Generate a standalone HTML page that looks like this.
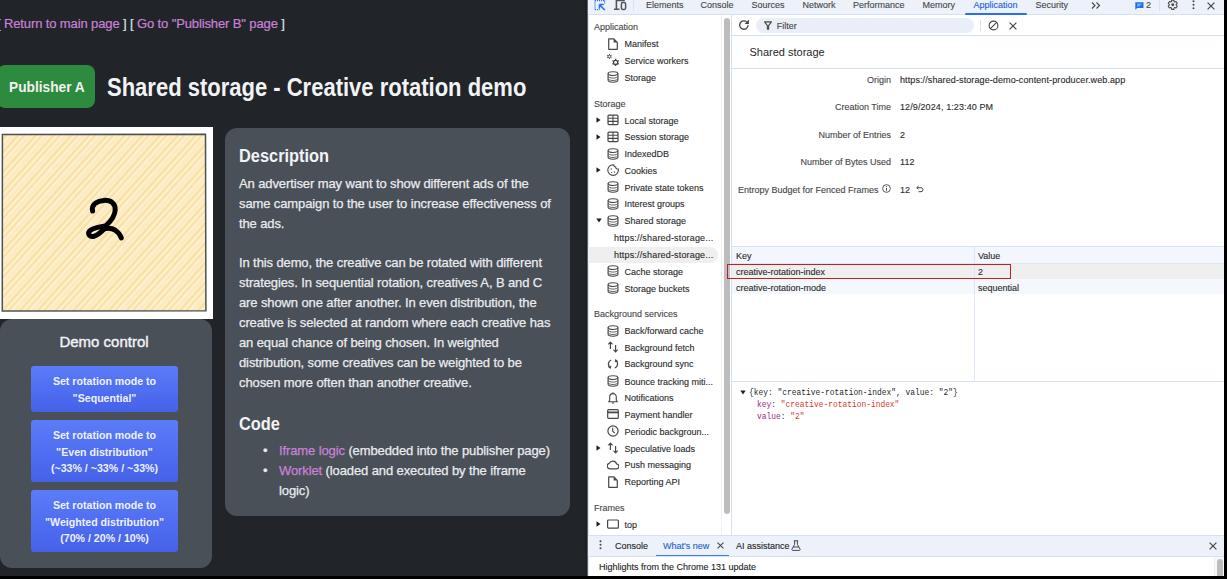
<!DOCTYPE html>
<html><head><meta charset="utf-8">
<style>
*{margin:0;padding:0;box-sizing:border-box}
html,body{width:1227px;height:579px;overflow:hidden;background:#000}
body{position:relative;font-family:"Liberation Sans",sans-serif}
.abs{position:absolute}
.nw{white-space:nowrap}
#page{position:absolute;left:0;top:0;width:588px;height:576px;background:#212529;overflow:hidden;color:#dee2e6}
#links{position:absolute;left:-3px;top:16px;font-size:13px;line-height:16px;white-space:nowrap;color:#dee2e6;letter-spacing:-0.12px}
#links a{color:#c882d8;text-decoration:none}
#badge{position:absolute;left:-3px;top:65px;width:98px;height:43px;background:#2c8b3e;border-radius:8px}
#badget{position:absolute;left:8.5px;top:77px;color:#f1f1f1;font-size:15px;line-height:20px;font-weight:700;white-space:nowrap;transform:scaleX(0.915);transform-origin:0 0}
#title{position:absolute;left:107px;top:72px;font-size:25px;line-height:30px;font-weight:700;color:#f1f3f5;white-space:nowrap;transform:scaleX(0.88);transform-origin:0 0}
#frame{position:absolute;left:0;top:127px;width:213px;height:192px;background:#fff}
#ctrl{position:absolute;left:0;top:319px;width:212px;height:249px;background:#495057;border-radius:12px}
#ctrl h3{position:absolute;left:0;width:212px;text-align:center;top:333px;font-weight:400;font-size:15px;line-height:18px;color:#f1f3f5}
.btn{position:absolute;left:31px;width:147px;border-radius:3px;background:linear-gradient(#5b7cf8,#4561e9)}
.bt{position:absolute;left:31px;width:147px;color:#eef1ff;font-weight:700;font-size:11px;line-height:16.4px;text-align:center;white-space:nowrap;transform:scaleX(0.965)}
#desc{position:absolute;left:225px;top:128px;width:345px;height:388px;background:#495057;border-radius:12px}
.p{position:absolute;left:239px;font-size:13px;white-space:nowrap;color:#e9ecef;line-height:20px;letter-spacing:-0.11px;-webkit-text-stroke:0.25px}
.h{position:absolute;left:239px;font-size:18px;font-weight:700;white-space:nowrap;color:#f1f3f5;line-height:20px;transform:scaleX(0.91);transform-origin:0 0}
.p a{color:#c882d8;text-decoration:none}

/* devtools */
.sb,.tb,.lbl,.val{-webkit-text-stroke:0.12px}
#links{-webkit-text-stroke:0.2px}
.sb{position:absolute;font-size:9px;line-height:12px;white-space:nowrap;color:#2b2b2b}
.hd{color:#474747}
.sel{position:absolute;left:588px;width:130px;height:15.5px;background:#efefef;border-radius:0 8px 8px 0}
.tb{position:absolute;top:-1px;font-size:9px;line-height:12px;white-space:nowrap;color:#474747}
.lbl{position:absolute;right:336px;font-size:9px;line-height:12px;white-space:nowrap;color:#474747;text-align:right}
.val{position:absolute;left:900px;font-size:9px;line-height:12px;white-space:nowrap;color:#2b2b2b;letter-spacing:0.1px}
.mono{position:absolute;font-family:"Liberation Mono",monospace;font-size:8.6px;line-height:11px;white-space:nowrap;transform:scaleX(0.92);transform-origin:0 0}

#dt{position:absolute;left:588px;top:0;width:637px;height:576px;background:#fff;overflow:hidden;color:#1f1f1f;font-size:9px}
</style></head><body>
<div id="page">
  <div id="links">[ <a>Return to main page</a> ] [ <a>Go to "Publisher B" page</a> ]</div>
  <div id="badge"></div><div id="badget">Publisher A</div>
  <div id="title">Shared storage - Creative rotation demo</div>
  <div id="frame"></div>
<svg class="abs" style="left:0;top:126px" width="212" height="193" viewBox="0 126 212 193">
<defs>
<pattern id="hatch" patternUnits="userSpaceOnUse" width="4.4" height="20" patternTransform="rotate(42)">
<rect x="0" y="0" width="4.4" height="20" fill="#fae3a8"/>
<rect x="0" y="0" width="1.5" height="20" fill="#fef5df"/>
</pattern>
<pattern id="hatch2" patternUnits="userSpaceOnUse" width="13.2" height="20" patternTransform="rotate(42)">
<rect x="6.6" y="0" width="1.2" height="20" fill="#fffaf0" opacity="0.6"/>
<rect x="10" y="0" width="1" height="20" fill="#f7d990" opacity="0.5"/>
</pattern>
</defs>
<rect x="2.6" y="134.4" width="203" height="176.4" fill="url(#hatch)"/>
<rect x="2.6" y="134.4" width="203" height="176.4" fill="url(#hatch2)"/>
<path d="M2.4,134.6 L205.5,134.2 L205.9,310.8 L2.3,311 Z" fill="none" stroke="#505050" stroke-width="1.5"/>
<path d="M92.6,211 C91,205.5 96,200.8 104,200.4 C111,200 115.5,203.5 115.2,210 C114.9,216 110,222 106,225.6 C101,227 93,227.5 89.6,231 C87.2,234.5 90,237.2 94,236.2 C98,235.2 101,232 103.5,229.5 C106,227.6 111,227.6 115,230 C118,232 120.3,235 121.3,237.8" fill="none" stroke="#000" stroke-width="5" stroke-linecap="round" stroke-linejoin="round"/>
</svg>
  <div id="ctrl"></div>
  <div id="dctl" class="abs nw" style="left:0;width:208px;text-align:center;top:333px;font-size:15px;font-weight:400;line-height:18px;color:#f1f3f5;-webkit-text-stroke:0.4px">Demo control</div>
  <div class="btn" style="top:366px;height:46px"></div><div class="bt" style="top:373.4px">Set rotation mode to<br>"Sequential"</div>
  <div class="btn" style="top:420px;height:62px"></div><div class="bt" style="top:427.4px">Set rotation mode to<br>"Even distribution"<br>(~33% / ~33% / ~33%)</div>
  <div class="btn" style="top:490px;height:62px"></div><div class="bt" style="top:497.4px">Set rotation mode to<br>"Weighted distribution"<br>(70% / 20% / 10%)</div>
  <div id="desc"></div>
  <div class="h" style="top:146px">Description</div>
  <div class="p" style="top:174px">An advertiser may want to show different ads of the<br>same campaign to the user to increase effectiveness of<br>the ads.</div>
  <div class="p" style="top:253px">In this demo, the creative can be rotated with different<br>strategies. In sequential rotation, creatives A, B and C<br>are shown one after another. In even distribution, the<br>creative is selected at random where each creative has<br>an equal chance of being chosen. In weighted<br>distribution, some creatives can be weighted to be<br>chosen more often than another creative.</div>
  <div class="h" style="top:413.5px">Code</div>
  <div class="p" style="top:440.5px;left:263px">&bull;</div>
  <div class="p" style="top:460.5px;left:263px">&bull;</div>
  <div class="p" style="top:440.5px;left:279px"><a>Iframe logic</a> (embedded into the publisher page)<br><a>Worklet</a> (loaded and executed by the iframe<br>logic)</div>
</div>
<!-- devtools background -->
<div class="abs" style="left:588px;top:0;width:636px;height:576px;background:#fff"></div>
<div class="abs" style="left:585px;top:0;width:2px;height:576px;background:#1c1f23"></div>
<div class="abs" style="left:587px;top:0;width:1px;height:576px;background:#5f6670"></div>
<div class="abs" style="left:588px;top:0;width:1px;height:576px;background:#dbe4f3"></div>
<!-- top toolbar -->
<div class="abs" style="left:588px;top:0;width:636px;height:14px;background:#ecf1fa"></div>
<div class="abs" style="left:588px;top:14px;width:636px;height:1px;background:#d4e0f3"></div>
<!-- inspect icon -->
<svg class="abs" style="left:588px;top:0" width="60" height="15" viewBox="588 0 60 15"><path d="M595,0.6H605M595,0.6V10M595,9.6H599.6M604.6,0.6V3.4" fill="none" stroke="#2a6ef5" stroke-width="1.1" stroke-dasharray="1.1 0.9"/><path d="M599.4,4.6L604.8,10M599.4,4.4H603.8M599.4,4.4V8.8" fill="none" stroke="#2a6ef5" stroke-width="1.5"/>
<path d="M616.4,0V9.2M614,9.2H619.5M615.6,0.4H624.8" fill="none" stroke="#555" stroke-width="1.6"/><rect x="621.4" y="2.6" width="4.2" height="6.8" rx="1.3" fill="none" stroke="#555" stroke-width="1.5"/></svg>
<div class="abs" style="left:633px;top:0;width:1px;height:11px;background:#d8e2f2"></div>
<div class="tb" style="left:646px">Elements</div>
<div class="tb" style="left:700.5px">Console</div>
<div class="tb" style="left:751.5px">Sources</div>
<div class="tb" style="left:802.5px">Network</div>
<div class="tb" style="left:853px">Performance</div>
<div class="tb" style="left:922.5px">Memory</div>
<div class="tb" style="left:973.5px;color:#1c64d4">Application</div>
<div class="abs" style="left:965px;top:13px;width:62px;height:2px;background:#2a6ef5;border-radius:1px"></div>
<div class="tb" style="left:1035.5px">Security</div>
<svg class="abs" style="left:1091px;top:2px" width="11" height="7" viewBox="0 0 11 7"><path d="M1 .5l3 3-3 3M5.5 .5l3 3-3 3" fill="none" stroke="#474747" stroke-width="1.1"/></svg>
<svg class="abs" style="left:1135px;top:2px" width="9" height="8" viewBox="0 0 9 8"><path d="M0.3 0.3h8.2v5.6H2.2L0.3 7.7z" fill="#1a73e8"/><path d="M2 2.2h4.5M2 3.8h3" stroke="#cfe0fb" stroke-width=".7"/></svg>
<div class="tb" style="left:1146px">2</div>
<div class="abs" style="left:1159px;top:0;width:1px;height:11px;background:#d8e2f2"></div>
<svg class="abs" style="left:1167.3px;top:-0.8px" width="11.5" height="11.5" viewBox="0 0 24 24"><path d="M19.14,12.94c0.04-0.3,0.06-0.61,0.06-0.94c0-0.32-0.02-0.64-0.07-0.94l2.03-1.58c0.18-0.14,0.23-0.41,0.12-0.61l-1.92-3.32c-0.12-0.22-0.37-0.29-0.59-0.22l-2.39,0.96c-0.5-0.38-1.030-0.7-1.62-0.94L14.4,2.81c-0.04-0.24-0.24-0.41-0.48-0.41h-3.84c-0.24,0-0.43,0.17-0.47,0.41L9.25,5.35C8.66,5.590,8.12,5.92,7.63,6.29L5.24,5.33c-0.22-0.08-0.47,0-0.59,0.22L2.74,8.87C2.62,9.08,2.66,9.34,2.86,9.48l2.03,1.58C4.84,11.36,4.8,11.69,4.8,12s0.02,0.64,0.07,0.94l-2.03,1.58c-0.18,0.14-0.23,0.41-0.12,0.61l1.92,3.32c0.12,0.22,0.37,0.29,0.59,0.22l2.39-0.96c0.5,0.38,1.03,0.7,1.62,0.94l0.36,2.54c0.05,0.24,0.24,0.41,0.48,0.41h3.84c0.24,0,0.44-0.17,0.47-0.41l0.36-2.54c0.59-0.24,1.13-0.56,1.62-0.94l2.39,0.96c0.22,0.08,0.47,0,0.59-0.22l1.92-3.32c0.12-0.22,0.07-0.47-0.12-0.61L19.14,12.94z" fill="none" stroke="#474747" stroke-width="2.2" stroke-linejoin="round"/><circle cx="12" cy="12" r="2.9" fill="#474747"/></svg>
<svg class="abs" style="left:1191.5px;top:0" width="3" height="10" viewBox="0 0 3 10"><circle cx="1.5" cy="1.3" r="1" fill="#474747"/><circle cx="1.5" cy="4.8" r="1" fill="#474747"/><circle cx="1.5" cy="8.3" r="1" fill="#474747"/></svg>
<svg class="abs" style="left:1207.2px;top:1.6px" width="8" height="8" viewBox="0 0 8 8"><path d="M.6 .6l6.8 6.8M7.4 .6L.6 7.4" stroke="#474747" stroke-width="1.2"/></svg>

<!-- sidebar scrollbar & divider -->
<div class="abs" style="left:721px;top:15px;width:10px;height:520px;background:#fff;border-left:1px solid #f0f0f0"></div>
<div class="abs" style="left:723.8px;top:18px;width:6px;height:496px;background:#bdbdbd;border-radius:3px"></div>
<div class="abs" style="left:731px;top:15px;width:1px;height:520px;background:#d4e0f3"></div>

<!-- main toolbar -->
<svg class="abs" style="left:738px;top:19px" width="12" height="12" viewBox="0 0 12 12"><path d="M10.1 6.2a4.2 4.2 0 1 1-1.5-3.4" fill="none" stroke="#474747" stroke-width="1.3"/><path d="M10.9 .6v4.3H6.6z" fill="#474747"/></svg>
<div class="abs" style="left:756px;top:18px;width:218px;height:15px;background:#e9eef7;border-radius:8px"></div>
<svg class="abs" style="left:764px;top:21px" width="8" height="9" viewBox="0 0 8 9"><path d="M.6 .9h6.8L4.6 4.6v3.6H3.4V4.6z" fill="none" stroke="#474747" stroke-width="1.1" stroke-linejoin="round"/></svg>
<div class="sb" style="left:776.7px;top:19.6px;color:#474747">Filter</div>
<div class="abs" style="left:980px;top:20px;width:1px;height:11px;background:#d8e2f2"></div>
<svg class="abs" style="left:987.5px;top:20px" width="11" height="11" viewBox="0 0 12 12"><circle cx="6" cy="6" r="4.8" fill="none" stroke="#474747" stroke-width="1.2"/><path d="M2.6 9.4l6.8-6.8" stroke="#474747" stroke-width="1.2"/></svg>
<svg class="abs" style="left:1009px;top:21.5px" width="8" height="8" viewBox="0 0 8 8"><path d="M.6 .6l6.8 6.8M7.4 .6L.6 7.4" stroke="#474747" stroke-width="1.2"/></svg>
<div class="abs" style="left:732px;top:35px;width:492px;height:1px;background:#d4e0f3"></div>

<!-- header -->
<div class="abs nw" style="left:749.5px;top:44.5px;font-size:11px;line-height:14px;color:#1f1f1f">Shared storage</div>
<div class="abs" style="left:732px;top:68px;width:492px;height:1px;background:#d4e0f3"></div>

<!-- rows -->
<div class="lbl" style="top:74.0px">Origin</div><div class="val" style="top:74.0px">https://shared-storage-demo-content-producer.web.app</div>
<div class="lbl" style="top:101.1px">Creation Time</div><div class="val" style="top:101.1px">12/9/2024, 1:23:40 PM</div>
<div class="lbl" style="top:129.1px">Number of Entries</div><div class="val" style="top:129.1px">2</div>
<div class="lbl" style="top:156.3px">Number of Bytes Used</div><div class="val" style="top:156.3px">112</div>
<div class="lbl" style="top:183.7px;right:348.5px">Entropy Budget for Fenced Frames</div>
<svg class="abs" style="left:881.5px;top:183.5px" width="9" height="9" viewBox="0 0 10 10"><circle cx="5" cy="5" r="4.3" fill="none" stroke="#474747" stroke-width="1"/><path d="M5 4.3v3.2" stroke="#474747" stroke-width="1.1"/><circle cx="5" cy="2.8" r=".6" fill="#474747"/></svg>
<div class="val" style="top:183.7px">12</div>
<svg class="abs" style="left:915.5px;top:185px" width="8" height="8" viewBox="0 0 8 8"><path d="M2.5 1L.8 2.7l1.7 1.7M.8 2.7h4.2a2 2 0 0 1 0 4H2.5" fill="none" stroke="#474747" stroke-width="1"/></svg>

<!-- table -->
<div class="abs" style="left:732px;top:246px;width:492px;height:1px;background:#d4e0f3"></div>
<div class="abs" style="left:732px;top:247px;width:492px;height:16px;background:#f3f6fc"></div>
<div class="abs" style="left:732px;top:263px;width:492px;height:1px;background:#dde6f5"></div>
<div class="abs" style="left:732px;top:264px;width:492px;height:14.5px;background:#efefef"></div>
<div class="abs" style="left:732px;top:278.5px;width:492px;height:15.7px;background:#f4f7fc"></div>
<div class="abs" style="left:974px;top:247px;width:1px;height:134px;background:#dde6f5"></div>
<div class="sb" style="left:736px;top:250px">Key</div>
<div class="sb" style="left:978px;top:250px">Value</div>
<div class="sb" style="left:736px;top:266px">creative-rotation-index</div>
<div class="sb" style="left:978px;top:266px">2</div>
<div class="sb" style="left:736px;top:281.8px">creative-rotation-mode</div>
<div class="sb" style="left:978px;top:281.8px">sequential</div>
<div class="abs" style="left:727px;top:264px;width:284px;height:15px;border:1.3px solid #c41e24"></div>
<div class="abs" style="left:732px;top:381px;width:492px;height:1px;background:#d4e0f3"></div>

<!-- preview -->
<svg class="abs" style="left:739.5px;top:389.5px" width="6" height="5" viewBox="0 0 6 5"><path d="M0.3 0.5L5.7 0.5L3 4.5z" fill="#1f1f1f"/></svg>
<div class="mono" style="left:748.5px;top:388px;color:#1f1f1f">{key: "creative-rotation-index", value: "2"}</div>
<div class="mono" style="left:757px;top:400px"><span style="color:#9b2a7a">key</span><span style="color:#1f1f1f">: </span><span style="color:#d53a2e">"creative-rotation-index"</span></div>
<div class="mono" style="left:757px;top:412px"><span style="color:#9b2a7a">value</span><span style="color:#1f1f1f">: </span><span style="color:#d53a2e">"2"</span></div>

<!-- drawer -->
<div class="abs" style="left:588px;top:535px;width:636px;height:21.5px;background:#edf1f9;border-top:1px solid #d4e0f3;border-bottom:1px solid #d4e0f3"></div>
<svg class="abs" style="left:598.5px;top:540px" width="3" height="10" viewBox="0 0 3 10"><circle cx="1.5" cy="1.3" r="1" fill="#474747"/><circle cx="1.5" cy="4.8" r="1" fill="#474747"/><circle cx="1.5" cy="8.3" r="1" fill="#474747"/></svg>
<div class="sb" style="left:615px;top:539.5px;color:#1f1f1f">Console</div>
<div class="sb" style="left:663px;top:539.5px;color:#1c64d4">What's new</div>
<svg class="abs" style="left:717px;top:541.5px" width="7" height="7" viewBox="0 0 8 8"><path d="M.6 .6l6.8 6.8M7.4 .6L.6 7.4" stroke="#474747" stroke-width="1.2"/></svg>
<div class="abs" style="left:656px;top:554.5px;width:73px;height:1.5px;background:#3b7cf0"></div>
<div class="sb" style="left:736px;top:539.5px;color:#1f1f1f">AI assistance</div>
<svg class="abs" style="left:790.5px;top:539.5px" width="10" height="11" viewBox="0 0 10 11"><path d="M2.8 .8h4.4M3.6 .8v3.6L.9 9.2a.8.8 0 0 0 .7 1.2h6.8a.8.8 0 0 0 .7-1.2L6.4 4.4V.8M2.2 7h5.6" fill="none" stroke="#474747" stroke-width="1"/></svg>
<svg class="abs" style="left:1209px;top:541.5px" width="8" height="8" viewBox="0 0 8 8"><path d="M.6 .6l6.8 6.8M7.4 .6L.6 7.4" stroke="#474747" stroke-width="1.2"/></svg>
<div class="sb" style="left:599px;top:561px;color:#1f1f1f">Highlights from the Chrome 131 update</div>
<div class="abs" style="left:1214px;top:556.5px;width:10px;height:19.5px;background:#f8f8f8;border-left:1px solid #ececec"></div>
<div class="abs" style="left:1217px;top:559px;width:5.5px;height:17px;background:#bdbdbd;border-radius:3px 3px 0 0"></div>
<div class="sb hd" style="top:21.1px;left:594px">Application</div>
<svg class="abs" style="left:606.8px;top:37.7px" width="12" height="12" viewBox="0 0 12 12"><path d="M1.7 .9h5.2l3.4 3.4v7H1.7z" fill="none" stroke="#474747" stroke-width="1.2" stroke-linejoin="round"/><path d="M6.6 .9v3.7h3.7z" fill="#474747"/></svg>
<div class="sb" style="top:38.2px;left:624.5px">Manifest</div>
<svg class="abs" style="left:606.8px;top:54.4px" width="12" height="12" viewBox="0 0 12 12"><circle cx="2.4" cy="2.5" r="1.35" fill="none" stroke="#474747" stroke-width="1.0"/><path d="M3.79 3.30L4.57 3.75M2.40 4.10L2.40 5.00M1.01 3.30L0.23 3.75M1.01 1.70L0.23 1.25M2.40 0.90L2.40 0.00M3.79 1.70L4.57 1.25" stroke="#474747" stroke-width="1.0"/><circle cx="8.6" cy="8.4" r="2.1" fill="none" stroke="#474747" stroke-width="1.3"/><path d="M10.68 9.60L11.72 10.20M8.60 10.80L8.60 12.00M6.52 9.60L5.48 10.20M6.52 7.20L5.48 6.60M8.60 6.00L8.60 4.80M10.68 7.20L11.72 6.60" stroke="#474747" stroke-width="1.3"/></svg>
<div class="sb" style="top:54.9px;left:624.5px">Service workers</div>
<svg class="abs" style="left:606.8px;top:71.4px" width="12" height="12" viewBox="0 0 12 12"><ellipse cx="6" cy="2.6" rx="4.9" ry="1.9" fill="none" stroke="#474747" stroke-width="1.1"/><path d="M1.1 2.6v6.7c0 1.05 2.2 1.9 4.9 1.9s4.9-.85 4.9-1.9V2.6" fill="none" stroke="#474747" stroke-width="1.1"/><path d="M1.1 5.2c0 1.05 2.2 1.9 4.9 1.9s4.9-.85 4.9-1.9M1.1 7.6c0 1.05 2.2 1.9 4.9 1.9s4.9-.85 4.9-1.9" fill="none" stroke="#474747" stroke-width=".85"/></svg>
<div class="sb" style="top:71.9px;left:624.5px">Storage</div>
<div class="sb hd" style="top:97.6px;left:594px">Storage</div>
<svg class="abs" style="left:596px;top:117.3px" width="5" height="6" viewBox="0 0 5 6"><path d="M0.5 0.3L4.5 3L0.5 5.7z" fill="#1f1f1f"/></svg>
<svg class="abs" style="left:606.8px;top:114.3px" width="12" height="12" viewBox="0 0 12 12"><rect x="1" y="1.2" width="10" height="9.4" rx="1" fill="none" stroke="#474747" stroke-width="1.2"/><path d="M1 4.3h10M1 7.4h10M6 1.2v9.4" stroke="#474747" stroke-width="1.1"/></svg>
<div class="sb" style="top:114.8px;left:624.5px">Local storage</div>
<svg class="abs" style="left:596px;top:133.8px" width="5" height="6" viewBox="0 0 5 6"><path d="M0.5 0.3L4.5 3L0.5 5.7z" fill="#1f1f1f"/></svg>
<svg class="abs" style="left:606.8px;top:130.8px" width="12" height="12" viewBox="0 0 12 12"><rect x="1" y="1.2" width="10" height="9.4" rx="1" fill="none" stroke="#474747" stroke-width="1.2"/><path d="M1 4.3h10M1 7.4h10M6 1.2v9.4" stroke="#474747" stroke-width="1.1"/></svg>
<div class="sb" style="top:131.3px;left:624.5px">Session storage</div>
<svg class="abs" style="left:606.8px;top:147.5px" width="12" height="12" viewBox="0 0 12 12"><ellipse cx="6" cy="2.6" rx="4.9" ry="1.9" fill="none" stroke="#474747" stroke-width="1.1"/><path d="M1.1 2.6v6.7c0 1.05 2.2 1.9 4.9 1.9s4.9-.85 4.9-1.9V2.6" fill="none" stroke="#474747" stroke-width="1.1"/><path d="M1.1 5.2c0 1.05 2.2 1.9 4.9 1.9s4.9-.85 4.9-1.9M1.1 7.6c0 1.05 2.2 1.9 4.9 1.9s4.9-.85 4.9-1.9" fill="none" stroke="#474747" stroke-width=".85"/></svg>
<div class="sb" style="top:148.0px;left:624.5px">IndexedDB</div>
<svg class="abs" style="left:596px;top:167.0px" width="5" height="6" viewBox="0 0 5 6"><path d="M0.5 0.3L4.5 3L0.5 5.7z" fill="#1f1f1f"/></svg>
<svg class="abs" style="left:606.8px;top:164.0px" width="12" height="12" viewBox="0 0 12 12"><path d="M6 .8c.3 0 .6 0 .9.1a1.8 1.8 0 0 0 1.8 2.1 1.8 1.8 0 0 0 2.5 1.9c.1.4.2.8.2 1.2A5.3 5.3 0 1 1 6 .8z" fill="none" stroke="#474747" stroke-width="1.1"/><circle cx="4.2" cy="5" r=".7" fill="#474747"/><circle cx="7.5" cy="8" r=".7" fill="#474747"/><circle cx="4.6" cy="8.5" r=".6" fill="#474747"/></svg>
<div class="sb" style="top:164.5px;left:624.5px">Cookies</div>
<svg class="abs" style="left:606.8px;top:181.1px" width="12" height="12" viewBox="0 0 12 12"><ellipse cx="6" cy="2.6" rx="4.9" ry="1.9" fill="none" stroke="#474747" stroke-width="1.1"/><path d="M1.1 2.6v6.7c0 1.05 2.2 1.9 4.9 1.9s4.9-.85 4.9-1.9V2.6" fill="none" stroke="#474747" stroke-width="1.1"/><path d="M1.1 5.2c0 1.05 2.2 1.9 4.9 1.9s4.9-.85 4.9-1.9M1.1 7.6c0 1.05 2.2 1.9 4.9 1.9s4.9-.85 4.9-1.9" fill="none" stroke="#474747" stroke-width=".85"/></svg>
<div class="sb" style="top:181.6px;left:624.5px">Private state tokens</div>
<svg class="abs" style="left:606.8px;top:197.6px" width="12" height="12" viewBox="0 0 12 12"><ellipse cx="6" cy="2.6" rx="4.9" ry="1.9" fill="none" stroke="#474747" stroke-width="1.1"/><path d="M1.1 2.6v6.7c0 1.05 2.2 1.9 4.9 1.9s4.9-.85 4.9-1.9V2.6" fill="none" stroke="#474747" stroke-width="1.1"/><path d="M1.1 5.2c0 1.05 2.2 1.9 4.9 1.9s4.9-.85 4.9-1.9M1.1 7.6c0 1.05 2.2 1.9 4.9 1.9s4.9-.85 4.9-1.9" fill="none" stroke="#474747" stroke-width=".85"/></svg>
<div class="sb" style="top:198.1px;left:624.5px">Interest groups</div>
<svg class="abs" style="left:595.5px;top:218.4px" width="6" height="5" viewBox="0 0 6 5"><path d="M0.3 0.5L5.7 0.5L3 4.5z" fill="#1f1f1f"/></svg>
<svg class="abs" style="left:606.8px;top:214.6px" width="12" height="12" viewBox="0 0 12 12"><ellipse cx="6" cy="2.6" rx="4.9" ry="1.9" fill="none" stroke="#474747" stroke-width="1.1"/><path d="M1.1 2.6v6.7c0 1.05 2.2 1.9 4.9 1.9s4.9-.85 4.9-1.9V2.6" fill="none" stroke="#474747" stroke-width="1.1"/><path d="M1.1 5.2c0 1.05 2.2 1.9 4.9 1.9s4.9-.85 4.9-1.9M1.1 7.6c0 1.05 2.2 1.9 4.9 1.9s4.9-.85 4.9-1.9" fill="none" stroke="#474747" stroke-width=".85"/></svg>
<div class="sb" style="top:215.1px;left:624.5px">Shared storage</div>
<div class="sb" style="top:232.2px;left:614px;letter-spacing:0.17px">https://shared-storage...</div>
<div class="sel" style="top:247.0px"></div>
<div class="sb" style="top:248.7px;left:614px;letter-spacing:0.17px">https://shared-storage...</div>
<svg class="abs" style="left:606.8px;top:265.0px" width="12" height="12" viewBox="0 0 12 12"><ellipse cx="6" cy="2.6" rx="4.9" ry="1.9" fill="none" stroke="#474747" stroke-width="1.1"/><path d="M1.1 2.6v6.7c0 1.05 2.2 1.9 4.9 1.9s4.9-.85 4.9-1.9V2.6" fill="none" stroke="#474747" stroke-width="1.1"/><path d="M1.1 5.2c0 1.05 2.2 1.9 4.9 1.9s4.9-.85 4.9-1.9M1.1 7.6c0 1.05 2.2 1.9 4.9 1.9s4.9-.85 4.9-1.9" fill="none" stroke="#474747" stroke-width=".85"/></svg>
<div class="sb" style="top:265.5px;left:624.5px">Cache storage</div>
<svg class="abs" style="left:606.8px;top:282.0px" width="12" height="12" viewBox="0 0 12 12"><ellipse cx="6" cy="2.6" rx="4.9" ry="1.9" fill="none" stroke="#474747" stroke-width="1.1"/><path d="M1.1 2.6v6.7c0 1.05 2.2 1.9 4.9 1.9s4.9-.85 4.9-1.9V2.6" fill="none" stroke="#474747" stroke-width="1.1"/><path d="M1.1 5.2c0 1.05 2.2 1.9 4.9 1.9s4.9-.85 4.9-1.9M1.1 7.6c0 1.05 2.2 1.9 4.9 1.9s4.9-.85 4.9-1.9" fill="none" stroke="#474747" stroke-width=".85"/></svg>
<div class="sb" style="top:282.5px;left:624.5px">Storage buckets</div>
<div class="sb hd" style="top:308.1px;left:594px">Background services</div>
<svg class="abs" style="left:606.8px;top:324.7px" width="12" height="12" viewBox="0 0 12 12"><ellipse cx="6" cy="2.6" rx="4.9" ry="1.9" fill="none" stroke="#474747" stroke-width="1.1"/><path d="M1.1 2.6v6.7c0 1.05 2.2 1.9 4.9 1.9s4.9-.85 4.9-1.9V2.6" fill="none" stroke="#474747" stroke-width="1.1"/><path d="M1.1 5.2c0 1.05 2.2 1.9 4.9 1.9s4.9-.85 4.9-1.9M1.1 7.6c0 1.05 2.2 1.9 4.9 1.9s4.9-.85 4.9-1.9" fill="none" stroke="#474747" stroke-width=".85"/></svg>
<div class="sb" style="top:325.2px;left:624.5px">Back/forward cache</div>
<svg class="abs" style="left:606.8px;top:341.2px" width="12" height="12" viewBox="0 0 12 12"><path d="M3.4 8V1.2M1.3 3.3l2.1-2.1 2.1 2.1M8.6 4v6.8M6.5 8.7l2.1 2.1 2.1-2.1" fill="none" stroke="#474747" stroke-width="1.2"/></svg>
<div class="sb" style="top:341.7px;left:624.5px">Background fetch</div>
<svg class="abs" style="left:606.8px;top:357.9px" width="12" height="12" viewBox="0 0 12 12"><path d="M4.2 2A4.4 4.4 0 0 0 3 9.5M7.8 10a4.4 4.4 0 0 0 1.2-7.5" fill="none" stroke="#474747" stroke-width="1.3"/><path d="M1.4 8.6L3.3 10l.5-2.2M10.6 3.4L8.7 2l-.5 2.2" fill="none" stroke="#474747" stroke-width="1.1"/></svg>
<div class="sb" style="top:358.4px;left:624.5px">Background sync</div>
<svg class="abs" style="left:606.8px;top:375.0px" width="12" height="12" viewBox="0 0 12 12"><ellipse cx="6" cy="2.6" rx="4.9" ry="1.9" fill="none" stroke="#474747" stroke-width="1.1"/><path d="M1.1 2.6v6.7c0 1.05 2.2 1.9 4.9 1.9s4.9-.85 4.9-1.9V2.6" fill="none" stroke="#474747" stroke-width="1.1"/><path d="M1.1 5.2c0 1.05 2.2 1.9 4.9 1.9s4.9-.85 4.9-1.9M1.1 7.6c0 1.05 2.2 1.9 4.9 1.9s4.9-.85 4.9-1.9" fill="none" stroke="#474747" stroke-width=".85"/></svg>
<div class="sb" style="top:375.5px;left:624.5px">Bounce tracking miti...</div>
<svg class="abs" style="left:606.8px;top:391.5px" width="12" height="12" viewBox="0 0 12 12"><path d="M6 1.6c-2 0-3.3 1.5-3.3 3.5v3.4L1.6 9.8h8.8L9.3 8.5V5.1c0-2-1.3-3.5-3.3-3.5z" fill="none" stroke="#474747" stroke-width="1.1" stroke-linejoin="round"/><path d="M6 .3v1.3M4.8 11h2.4" stroke="#474747" stroke-width="1.1"/></svg>
<div class="sb" style="top:392.0px;left:624.5px">Notifications</div>
<svg class="abs" style="left:606.8px;top:408.2px" width="12" height="12" viewBox="0 0 12 12"><rect x=".7" y="1.6" width="10.6" height="8.8" rx="1" fill="none" stroke="#474747" stroke-width="1.2"/><path d="M.7 4.4h10.6" stroke="#474747" stroke-width="1.8"/></svg>
<div class="sb" style="top:408.7px;left:624.5px">Payment handler</div>
<svg class="abs" style="left:606.8px;top:425.2px" width="12" height="12" viewBox="0 0 12 12"><circle cx="6" cy="6" r="5.1" fill="none" stroke="#474747" stroke-width="1.2"/><path d="M5.7 2.8v3.4l2.1 2" fill="none" stroke="#474747" stroke-width="1.1"/></svg>
<div class="sb" style="top:425.7px;left:624.5px">Periodic backgroun...</div>
<svg class="abs" style="left:596px;top:445.1px" width="5" height="6" viewBox="0 0 5 6"><path d="M0.5 0.3L4.5 3L0.5 5.7z" fill="#1f1f1f"/></svg>
<svg class="abs" style="left:606.8px;top:442.1px" width="12" height="12" viewBox="0 0 12 12"><path d="M3.4 8V1.2M1.3 3.3l2.1-2.1 2.1 2.1M8.6 4v6.8M6.5 8.7l2.1 2.1 2.1-2.1" fill="none" stroke="#474747" stroke-width="1.2"/></svg>
<div class="sb" style="top:442.6px;left:624.5px">Speculative loads</div>
<svg class="abs" style="left:606.8px;top:458.8px" width="12" height="12" viewBox="0 0 12 12"><path d="M3.1 9.8h6.2a2.4 2.4 0 0 0 .3-4.8 3.9 3.9 0 0 0-7.3-.7A2.8 2.8 0 0 0 3.1 9.8z" fill="none" stroke="#474747" stroke-width="1.2"/></svg>
<div class="sb" style="top:459.3px;left:624.5px">Push messaging</div>
<svg class="abs" style="left:606.8px;top:475.7px" width="12" height="12" viewBox="0 0 12 12"><path d="M1.7 .9h5.2l3.4 3.4v7H1.7z" fill="none" stroke="#474747" stroke-width="1.2" stroke-linejoin="round"/><path d="M6.6 .9v3.7h3.7z" fill="#474747"/></svg>
<div class="sb" style="top:476.2px;left:624.5px">Reporting API</div>
<div class="sb hd" style="top:501.6px;left:594px">Frames</div>
<svg class="abs" style="left:596px;top:521.0px" width="5" height="6" viewBox="0 0 5 6"><path d="M0.5 0.3L4.5 3L0.5 5.7z" fill="#1f1f1f"/></svg>
<svg class="abs" style="left:606.8px;top:518.0px" width="12" height="12" viewBox="0 0 12 12"><rect x=".6" y="2" width="10.8" height="8.2" rx="1" fill="none" stroke="#474747" stroke-width="1.2"/></svg>
<div class="sb" style="top:518.5px;left:624.5px">top</div>

</body></html>
